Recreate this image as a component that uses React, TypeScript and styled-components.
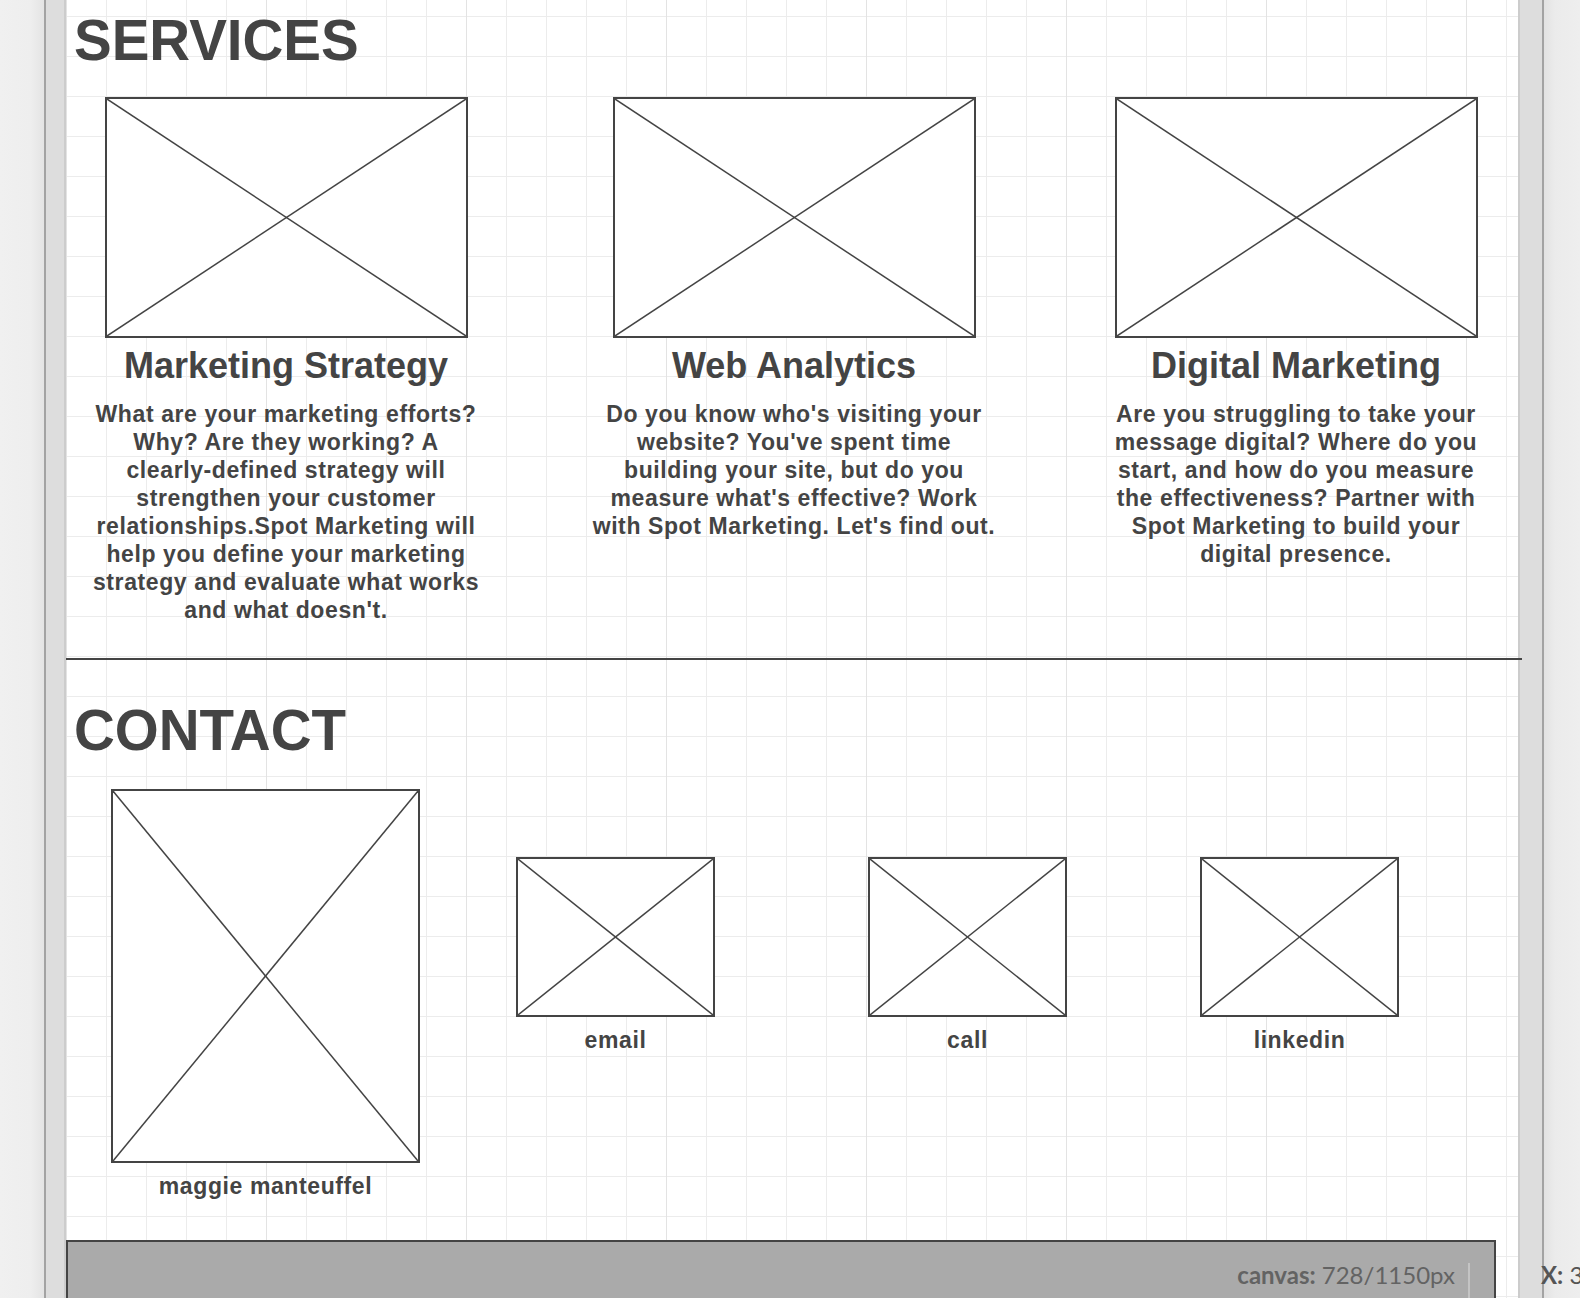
import React from "react";
import styled, { createGlobalStyle } from "styled-components";

const GlobalStyle = createGlobalStyle`
  html, body {
    margin: 0;
    padding: 0;
    background: #eeeeee;
  }
  body {
    font-family: "Liberation Sans", Arial, sans-serif;
  }
`;

const Shell = styled.div`
  position: relative;
  display: flex;
  width: 1580px;
  height: 1298px;
  overflow: hidden;
`;

const RailOuter = styled.div<{ $side: "left" | "right" }>`
  width: ${({ $side }) => ($side === "left" ? "44px" : "36px")};
  flex-shrink: 0;
  background: ${({ $side }) =>
    $side === "left"
      ? "linear-gradient(to right, #f0f0f0 0%, #eeeeee 70%, #e4e4e4 100%)"
      : "linear-gradient(to right, #e2e2e2 0%, #ebebeb 30%, #eeeeee 100%)"};
`;

const RailInner = styled.div<{ $side: "left" | "right" }>`
  width: ${({ $side }) => ($side === "left" ? "18px" : "22px")};
  flex-shrink: 0;
  background: #dddddd;
  border-left: 2px solid
    ${({ $side }) => ($side === "left" ? "#a3a3a3" : "#cccccc")};
  border-right: 2px solid
    ${({ $side }) => ($side === "left" ? "#cccccc" : "#a3a3a3")};
`;

const Canvas = styled.main`
  flex: 1;
  min-width: 0;
  display: flex;
  flex-direction: column;
  background-color: #ffffff;
  background-image: linear-gradient(to right, #e3e3e3 1px, transparent 1px),
    linear-gradient(to right, #ececec 1px, transparent 1px),
    linear-gradient(to bottom, #ececec 1px, transparent 1px);
  background-size: 200px 100%, 40px 40px, 40px 40px;
  background-position: 0 0, 0 16px, 0 16px;
  color: #444444;
`;

const SectionHeading = styled.h1<{ $top: number }>`
  margin: ${({ $top }) => $top}px 0 0 0;
  padding-left: 8px;
  font-size: 56.5px;
  line-height: 64px;
  font-weight: 700;
  color: #444444;
`;

const ServicesRow = styled.div`
  display: flex;
  align-items: flex-start;
  padding-left: 15px;
  margin-top: 24px;
`;

const ServiceColumn = styled.section<{ $left: number }>`
  width: 410px;
  flex-shrink: 0;
  margin-left: ${({ $left }) => $left}px;
  display: flex;
  flex-direction: column;
  align-items: center;
`;

const Placeholder = styled.div<{ $w: number; $h: number }>`
  box-sizing: border-box;
  width: ${({ $w }) => $w}px;
  height: ${({ $h }) => $h}px;
  border: 2px solid #444444;
  background: #ffffff;
  flex-shrink: 0;

  svg {
    display: block;
    width: 100%;
    height: 100%;
  }
`;

const ServiceTitle = styled.h2`
  margin: 8px 0 0 0;
  font-size: 36px;
  line-height: 40px;
  font-weight: 700;
  white-space: nowrap;
`;

const ServiceText = styled.p`
  margin: 14px 0 0 0;
  font-size: 23px;
  line-height: 28px;
  font-weight: 700;
  letter-spacing: 0.6px;
  text-align: center;
  white-space: nowrap;
`;

const Divider = styled.hr`
  position: relative;
  margin: 34px -4px 0 0;
  border: none;
  height: 2px;
  background: #444444;
`;

const ContactRow = styled.div`
  display: flex;
  align-items: flex-start;
  padding-left: 45px;
  margin-top: 26px;
`;

const ContactItem = styled.div<{ $left: number; $top: number }>`
  display: flex;
  flex-direction: column;
  align-items: center;
  margin-left: ${({ $left }) => $left}px;
  margin-top: ${({ $top }) => $top}px;
`;

const ItemLabel = styled.span`
  margin-top: 9px;
  font-size: 23px;
  line-height: 28px;
  font-weight: 700;
  letter-spacing: 0.6px;
  white-space: nowrap;
`;

const StatusBar = styled.footer`
  position: absolute;
  left: 66px;
  top: 1240px;
  box-sizing: border-box;
  width: 1430px;
  height: 80px;
  background: #aaaaaa;
  border: 2px solid #444444;
  border-bottom: none;
  display: flex;
  justify-content: flex-end;
  align-items: flex-start;
  padding: 19px 24px 0 0;
  gap: 13px;
`;

const StatusText = styled.span`
  font-family: Lato, "Liberation Sans", sans-serif;
  font-size: 24px;
  line-height: 28px;
  color: #636363;

  b {
    font-weight: 700;
  }
`;

const StatusSeparator = styled.span`
  width: 2px;
  height: 60px;
  margin-top: 2px;
  background: #c4c4c4;
`;

const Coords = styled.span`
  position: absolute;
  left: 1541px;
  top: 1261px;
  font-family: Lato, "Liberation Sans", sans-serif;
  font-size: 24px;
  line-height: 28px;
  color: #555555;
  white-space: nowrap;

  b {
    font-weight: 700;
  }
`;

const Cross: React.FC<{ w: number; h: number }> = ({ w, h }) => (
  <Placeholder $w={w} $h={h}>
    <svg viewBox="0 0 100 100" preserveAspectRatio="none">
      <line
        x1="0"
        y1="0"
        x2="100"
        y2="100"
        stroke="#444"
        strokeWidth="1.5"
        vectorEffect="non-scaling-stroke"
      />
      <line
        x1="100"
        y1="0"
        x2="0"
        y2="100"
        stroke="#444"
        strokeWidth="1.5"
        vectorEffect="non-scaling-stroke"
      />
    </svg>
  </Placeholder>
);

// lines are broken where the wireframe breaks them
const services = [
  {
    title: "Marketing Strategy",
    left: 0,
    lines: [
      "What are your marketing efforts?",
      "Why? Are they working? A",
      "clearly-defined strategy will",
      "strengthen your customer",
      "relationships.Spot Marketing will",
      "help you define your marketing",
      "strategy and evaluate what works",
      "and what doesn't.",
    ],
  },
  {
    title: "Web Analytics",
    left: 98,
    lines: [
      "Do you know who's visiting your",
      "website? You've spent time",
      "building your site, but do you",
      "measure what's effective? Work",
      "with Spot Marketing. Let's find out.",
    ],
  },
  {
    title: "Digital Marketing",
    left: 92,
    lines: [
      "Are you struggling to take your",
      "message digital? Where do you",
      "start, and how do you measure",
      "the effectiveness? Partner with",
      "Spot Marketing to build your",
      "digital presence.",
    ],
  },
];

const contacts = [
  { label: "email", left: 96, top: 68 },
  { label: "call", left: 153, top: 68 },
  { label: "linkedin", left: 133, top: 68 },
];

const App: React.FC = () => {
  return (
    <>
      <GlobalStyle />
      <Shell>
        <RailOuter $side="left" />
        <RailInner $side="left" />
        <Canvas>
          <SectionHeading $top={9}>SERVICES</SectionHeading>
          <ServicesRow>
            {services.map((s) => (
              <ServiceColumn key={s.title} $left={s.left}>
                <Cross w={363} h={241} />
                <ServiceTitle>{s.title}</ServiceTitle>
                <ServiceText>
                  {s.lines.map((line, i) => (
                    <React.Fragment key={i}>
                      {line}
                      {i < s.lines.length - 1 && <br />}
                    </React.Fragment>
                  ))}
                </ServiceText>
              </ServiceColumn>
            ))}
          </ServicesRow>
          <Divider />
          <SectionHeading $top={39}>CONTACT</SectionHeading>
          <ContactRow>
            <ContactItem $left={0} $top={0}>
              <Cross w={309} h={374} />
              <ItemLabel>maggie manteuffel</ItemLabel>
            </ContactItem>
            {contacts.map((c) => (
              <ContactItem key={c.label} $left={c.left} $top={c.top}>
                <Cross w={199} h={160} />
                <ItemLabel>{c.label}</ItemLabel>
              </ContactItem>
            ))}
          </ContactRow>
        </Canvas>
        <RailInner $side="right" />
        <RailOuter $side="right" />
        <StatusBar>
          <StatusText>
            <b>canvas:</b> 728/1150px
          </StatusText>
          <StatusSeparator />
        </StatusBar>
        <Coords>
          <b>X:</b> 3
        </Coords>
      </Shell>
    </>
  );
};

export default App;
